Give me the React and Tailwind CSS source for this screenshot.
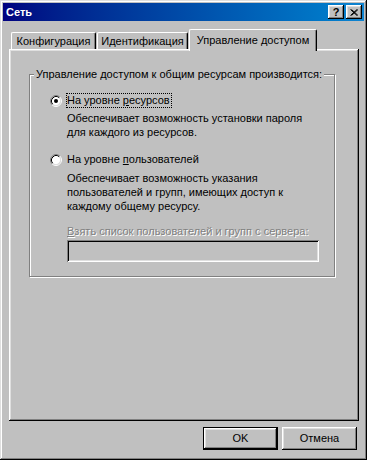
import React from "react";

const raised =
  "shadow-[inset_-1px_-1px_#000000,inset_1px_1px_#ffffff,inset_-2px_-2px_#808080,inset_2px_2px_#dfdfdf]";

const Radio = ({ checked }) => (
  <svg width="12" height="12" viewBox="0 0 12 12" className="shrink-0">
    <circle cx="6" cy="6" r="4.5" fill="#ffffff" />
    <path d="M2.11 9.89 A5.5 5.5 0 0 1 9.89 2.11" stroke="#808080" strokeWidth="1" fill="none" />
    <path d="M9.89 2.11 A5.5 5.5 0 0 1 2.11 9.89" stroke="#ffffff" strokeWidth="1" fill="none" />
    <path d="M2.82 9.18 A4.5 4.5 0 0 1 9.18 2.82" stroke="#000000" strokeWidth="1" fill="none" />
    <path d="M9.18 2.82 A4.5 4.5 0 0 1 2.82 9.18" stroke="#dfdfdf" strokeWidth="1" fill="none" />
    {checked && <circle cx="6" cy="6" r="2" fill="#000000" />}
  </svg>
);

const Tab = ({ label, width, active }) => (
  <div
    className={`flex items-center justify-center border-t border-l border-white rounded-tl-[2px] rounded-tr-[2px] border-r border-r-black shadow-[inset_-1px_0_#808080] bg-[#c0c0c0] ${
      active ? "relative z-10 h-[22px] -mb-[2px] pb-[2px]" : "h-[17px]"
    }`}
    style={{ width }}
  >
    <span className="leading-[14px]">{label}</span>
  </div>
);

export default function App() {
  return (
    <div className="w-[367px] h-[460px] bg-[#c0c0c0] p-[3px] flex flex-col text-[11px] text-black font-['Liberation_Sans',Arial,sans-serif] shadow-[inset_-1px_-1px_#000000,inset_1px_1px_#dfdfdf,inset_-2px_-2px_#808080,inset_2px_2px_#ffffff]">
      {/* title bar */}
      <div className="h-[18px] flex items-center justify-between pl-[3px] pr-[2px] bg-gradient-to-r from-[#000080] to-[#1084d0]">
        <span className="text-white font-bold leading-[14px]">Сеть</span>
        <div className="flex gap-[2px]">
          <div className={`w-[16px] h-[14px] bg-[#c0c0c0] flex items-center justify-center font-bold leading-none ${raised}`}>
            ?
          </div>
          <div className={`w-[16px] h-[14px] bg-[#c0c0c0] flex items-center justify-center ${raised}`}>
            <svg width="8" height="7" viewBox="0 0 8 7">
              <path d="M0.5 0.5 L7 6.5 M1.5 0.5 L8 6.5 M7 0.5 L0.5 6.5 M8 0.5 L1.5 6.5" stroke="#000" strokeWidth="1" />
            </svg>
          </div>
        </div>
      </div>

      {/* tabs */}
      <div className="mt-[8px] ml-[6px] w-[350px]">
        <div className="flex items-end pl-[2px] gap-[1px] h-[20px]">
          <Tab label="Конфигурация" width={85} />
          <Tab label="Идентификация" width={91} />
          <Tab label="Управление доступом" width={128} active />
        </div>
        <div className={`h-[372px] pl-[20px] pt-[25px] bg-[#c0c0c0] ${"shadow-[inset_-1px_-1px_#000000,inset_1px_1px_#ffffff,inset_-2px_-2px_#808080,inset_2px_2px_#dfdfdf]"}`}>
          {/* group box */}
          <div className="relative w-[306px] h-[203px] border border-[#808080] shadow-[inset_1px_1px_#ffffff,1px_1px_#ffffff] flex flex-col pt-[18px]">
            <span className="absolute left-[4px] -top-[8px] px-[2px] bg-[#c0c0c0] leading-[14px]">
              Управление доступом к общим ресурсам производится:
            </span>

            <div className="flex items-center pl-[20px] h-[15px] gap-[4px]">
              <Radio checked />
              <span className="border border-dotted border-black leading-[13px] pr-[1px]">
                На уровне <span className="underline underline-offset-[1px]">р</span>есурсов
              </span>
            </div>
            <div className="pl-[37px] mt-[3px] leading-[14px]">
              Обеспечивает возможность установки пароля
              <br />
              для каждого из ресурсов.
            </div>

            <div className="flex items-center pl-[20px] h-[15px] gap-[4px] mt-[13px]">
              <Radio />
              <span className="border border-transparent leading-[13px]">
                На уровне <span className="underline underline-offset-[1px]">п</span>ользователей
              </span>
            </div>
            <div className="pl-[37px] mt-[4px] leading-[14px]">
              Обеспечивает возможность указания
              <br />
              пользователей и групп, имеющих доступ к
              <br />
              каждому общему ресурсу.
            </div>

            <div className="pl-[37px] mt-[11px] leading-[14px] text-[#808080] [text-shadow:1px_1px_0_#ffffff]">
              <span className="underline underline-offset-[1px]">В</span>зять список пользователей и групп с сервера:
            </div>
            <div className="ml-[37px] mt-[2px] w-[252px] h-[22px] bg-[#c0c0c0] shadow-[inset_1px_1px_#808080,inset_-1px_-1px_#ffffff,inset_2px_2px_#000000,inset_-2px_-2px_#dfdfdf]" />
          </div>
        </div>
      </div>

      {/* buttons */}
      <div className="flex justify-end gap-[4px] pr-[7px] mt-[6px]">
        <button className="w-[75px] h-[23px] bg-[#c0c0c0] border border-black flex items-center justify-center shadow-[inset_-1px_-1px_#000000,inset_1px_1px_#ffffff,inset_-2px_-2px_#808080,inset_2px_2px_#dfdfdf]">
          OK
        </button>
        <button className={`w-[75px] h-[23px] bg-[#c0c0c0] flex items-center justify-center ${raised}`}>
          Отмена
        </button>
      </div>
    </div>
  );
}
